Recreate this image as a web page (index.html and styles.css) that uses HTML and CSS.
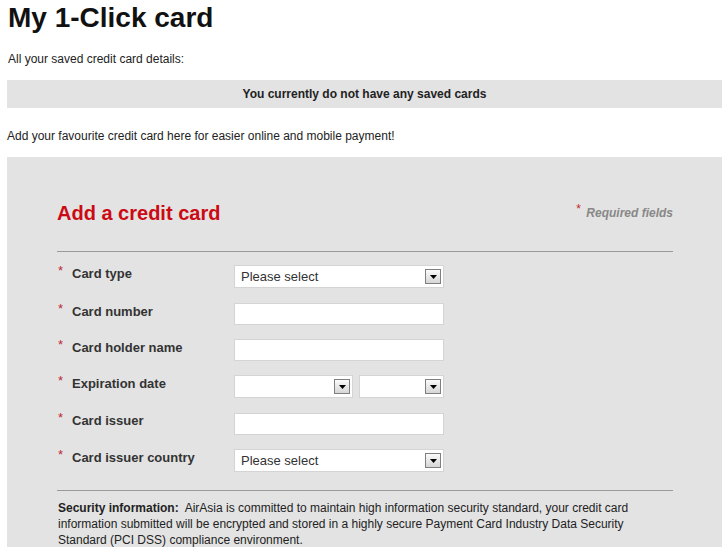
FILE: index.html
```html
<!DOCTYPE html>
<html lang="en">
<head>
<meta charset="utf-8">
<title>My 1-Click card</title>
<link rel="stylesheet" href="styles.css">
</head>
<body>
<div class="page">
  <h1 class="title">My 1-Click card</h1>
  <p class="intro">All your saved credit card details:</p>
  <div class="notice">You currently do not have any saved cards</div>
  <p class="add-text">Add your favourite credit card here for easier online and mobile payment!</p>

  <section class="panel">
    <div class="panel-head">
      <h2 class="panel-title">Add a credit card</h2>
      <span class="required"><span class="star">*</span> Required fields</span>
    </div>
    <hr class="rule">

    <form class="form">
      <div class="row row-tall">
        <label class="label"><span class="star">*</span>Card type</label>
        <div class="select w-full"><span class="select-text">Please select</span><span class="select-btn"><svg width="7" height="4" viewBox="0 0 7 4"><path d="M0 0h7L3.5 4z"/></svg></span></div>
      </div>
      <div class="row">
        <label class="label"><span class="star">*</span>Card number</label>
        <input class="field" type="text">
      </div>
      <div class="row">
        <label class="label"><span class="star">*</span>Card holder name</label>
        <input class="field" type="text">
      </div>
      <div class="row row-mid">
        <label class="label"><span class="star">*</span>Expiration date</label>
        <div class="pair">
          <div class="select w-month"><span class="select-text"></span><span class="select-btn"><svg width="7" height="4" viewBox="0 0 7 4"><path d="M0 0h7L3.5 4z"/></svg></span></div>
          <div class="select w-year"><span class="select-text"></span><span class="select-btn"><svg width="7" height="4" viewBox="0 0 7 4"><path d="M0 0h7L3.5 4z"/></svg></span></div>
        </div>
      </div>
      <div class="row row-mid">
        <label class="label"><span class="star">*</span>Card issuer</label>
        <input class="field" type="text">
      </div>
      <div class="row row-last">
        <label class="label"><span class="star">*</span>Card issuer country</label>
        <div class="select w-full"><span class="select-text">Please select</span><span class="select-btn"><svg width="7" height="4" viewBox="0 0 7 4"><path d="M0 0h7L3.5 4z"/></svg></span></div>
      </div>
    </form>

    <hr class="rule rule-bottom">
    <p class="security"><b>Security information:</b>&nbsp; AirAsia is committed to maintain high information security standard, your credit card information submitted will be encrypted and stored in a highly secure Payment Card Industry Data Security Standard (PCI DSS) compliance environment.</p>
  </section>
</div>
</body>
</html>
```

FILE: styles.css
```css
* { box-sizing: border-box; }

html, body {
  margin: 0;
  padding: 0;
  background: #ffffff;
}

body {
  font-family: "Liberation Sans", Arial, sans-serif;
  color: #222;
  font-size: 12px;
}

.page {
  padding: 2px 6px 0 7px;
}

.title {
  margin: 0 0 0 1px;
  font-size: 28px;
  line-height: 32px;
  font-weight: bold;
  color: #111;
}

.intro {
  margin: 18px 0 0 1px;
  line-height: 15px;
}

.notice {
  margin-top: 13px;
  height: 28px;
  line-height: 28px;
  background: #e3e3e3;
  text-align: center;
  font-weight: bold;
  color: #222;
}

.add-text {
  margin: 21px 0 0 0;
  line-height: 15px;
}

.panel {
  margin-top: 13px;
  background: #e3e3e3;
  padding: 44px 49px 20px 50px;
  min-height: 400px;
}

.panel-head {
  display: flex;
  justify-content: space-between;
  align-items: center;
  height: 24px;
}

.panel-title {
  margin: 0;
  font-size: 20px;
  line-height: 24px;
  font-weight: bold;
  color: #cc0a14;
}

.required {
  font-style: italic;
  font-weight: bold;
  color: #888;
  font-size: 12px;
}

.required .star {
  position: relative;
  top: -4px;
  margin-right: 2px;
  font-style: normal;
}

.star {
  color: #c0282d;
  font-weight: normal;
}

.rule {
  border: 0;
  border-top: 1px solid #9a9a9a;
  height: 0;
  margin: 26px 0 13px 0;
}

.rule-bottom {
  margin: 0 0 9px 0;
}

.form {
  display: flex;
  flex-direction: column;
}

.row {
  display: flex;
  align-items: flex-start;
  height: 36px;
}

.row-tall { height: 38px; }
.row-mid { height: 37px; }
.row-last { height: 41px; }

.label {
  width: 177px;
  flex: none;
  padding-top: 1px;
  font-size: 13px;
  line-height: 16px;
  font-weight: bold;
  color: #333;
  display: flex;
}

.label .star {
  width: 15px;
  flex: none;
  padding-left: 1px;
  font-size: 13px;
  position: relative;
  top: -3px;
}

.field {
  width: 210px;
  height: 22px;
  margin: 0;
  border: 1px solid #d4d4d4;
  background: #fff;
  padding: 0 5px;
  font: inherit;
}

.row-mid .field {
  margin-top: 1px;
}

.pair {
  display: flex;
  gap: 6px;
}

.select {
  height: 23px;
  border: 1px solid #d4d4d4;
  background: #fff;
  display: flex;
  align-items: center;
  justify-content: space-between;
  padding: 0 2px 0 6px;
  font-size: 13px;
  color: #333;
}

.w-full { width: 210px; }
.w-month { width: 119px; }
.w-year { width: 85px; }

.select-text {
  line-height: 16px;
}

.select-btn {
  width: 16px;
  height: 15px;
  border: 1px solid #7f7f7f;
  background: linear-gradient(#fbfbfb, #d6d6d6);
  display: flex;
  align-items: center;
  justify-content: center;
}

.select-btn svg {
  display: block;
  fill: #000;
}

.security {
  margin: 0;
  font-size: 12px;
  line-height: 16px;
  color: #222;
  padding-left: 1px;
}
```
